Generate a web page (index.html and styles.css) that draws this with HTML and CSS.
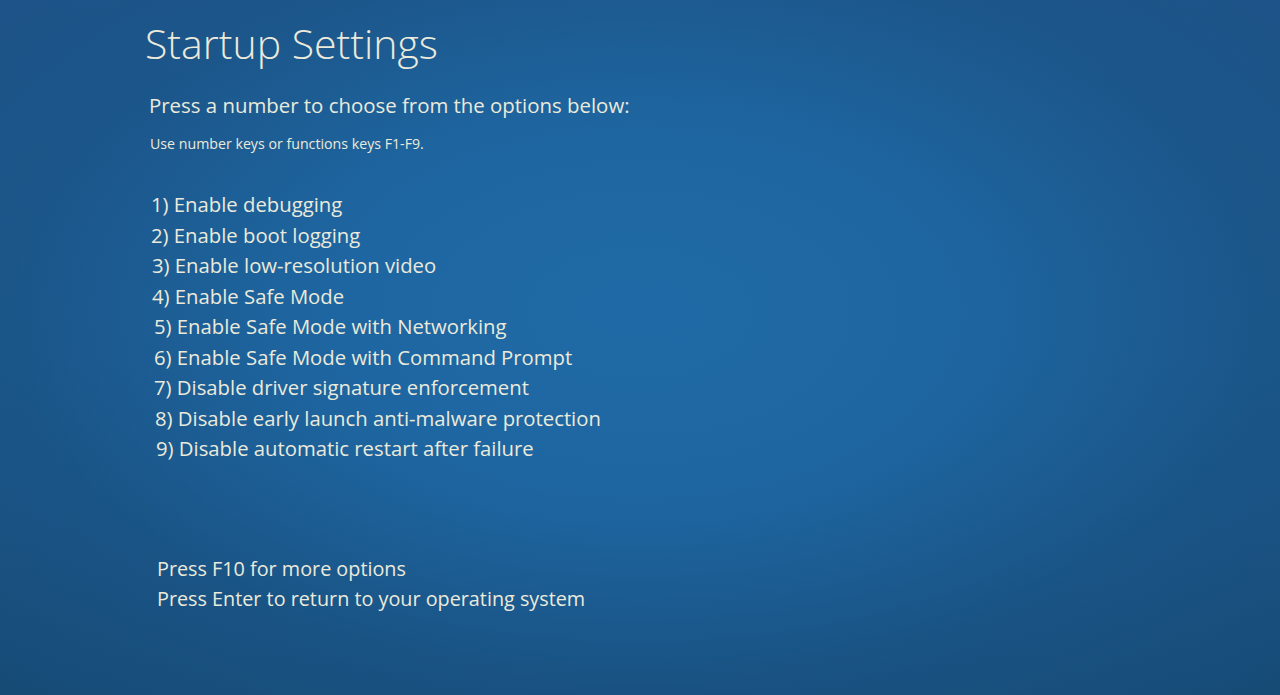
FILE: index.html
```html
<!DOCTYPE html>
<html lang="en">
<head>
<meta charset="utf-8">
<title>Startup Settings</title>
<link rel="stylesheet" href="styles.css">
</head>
<body>
<main class="screen">
  <h1 class="title">Startup Settings</h1>
  <p class="lead">Press a number to choose from the options below:</p>
  <p class="hint">Use number keys or functions keys F1-F9.</p>
  <ol class="options">
    <li class="opt o1">1) Enable debugging</li>
    <li class="opt o2">2) Enable boot logging</li>
    <li class="opt o3">3) Enable low-resolution video</li>
    <li class="opt o4">4) Enable Safe Mode</li>
    <li class="opt o5">5) Enable Safe Mode with Networking</li>
    <li class="opt o6">6) Enable Safe Mode with Command Prompt</li>
    <li class="opt o7">7) Disable driver signature enforcement</li>
    <li class="opt o8">8) Disable early launch anti-malware protection</li>
    <li class="opt o9">9) Disable automatic restart after failure</li>
  </ol>
  <div class="footer">
    <p class="foot">Press F10 for more options</p>
    <p class="foot">Press Enter to return to your operating system</p>
  </div>
</main>
</body>
</html>
```
FILE: styles.css
```css
html, body {
  margin: 0;
  padding: 0;
  height: 100%;
}
body {
  background:
    radial-gradient(ellipse 70% 75% at 50% 45%, #1f6aa6 0%, #1e66a1 35%, rgba(27,88,140,0.6) 70%, rgba(22,75,118,0) 100%),
    linear-gradient(180deg, #1d5287 0%, #1b5284 50%, #164b76 100%);
  color: #ebeadb;
  font-family: "Open Sans", "Noto Sans", sans-serif;
  overflow: hidden;
}
.screen {
  display: flex;
  flex-direction: column;
  padding: 12px 0 0 145px;
}
.title {
  margin: 0;
  font-weight: 300;
  font-size: 41px;
  line-height: 62px;
}
.lead {
  margin: 16px 0 0 4px;
  font-size: 20.4px;
  line-height: 30px;
}
.hint {
  margin: 13px 0 0 5px;
  font-size: 14.2px;
  line-height: 22px;
}
.options {
  list-style: none;
  margin: 34px 0 0 6px;
  padding: 0;
  font-size: 20.3px;
  line-height: 30.5px;
}
.o3, .o4 { padding-left: 1px; }
.o5, .o6, .o7 { padding-left: 3px; }
.o8 { padding-left: 4px; }
.o9 { padding-left: 5px; }
.footer {
  margin: 90px 0 0 12px;
  font-size: 19.8px;
  line-height: 30px;
}
.foot {
  margin: 0;
}
```
